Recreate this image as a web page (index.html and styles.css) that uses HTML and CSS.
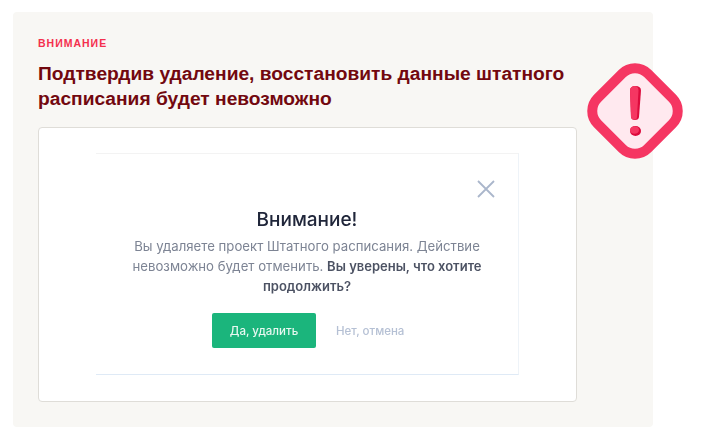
FILE: index.html
```html
<!DOCTYPE html>
<html lang="en">
  <head>
    <title>Внимание</title>
    <link rel="stylesheet" href="styles.css">
  </head>

  <body>
    <div class="panel">
      <p class="label">ВНИМАНИЕ</p>
      <h2 class="title">Подтвердив удаление, восстановить данные штатного расписания будет невозможно</h2>
      <div class="card">
        <div class="shot">
          <svg class="close" width="18" height="18" viewBox="0 0 18 18">
            <path d="M1 1L17 17M17 1L1 17" stroke="#aab6cb" stroke-width="1.8" fill="none"/>
          </svg>
          <h3 class="shot-title">Внимание!</h3>
          <p class="shot-text">Вы удаляете проект Штатного расписания. Действие невозможно будет отменить. <b>Вы уверены, что хотите продолжить?</b></p>
          <div class="actions">
            <span class="btn-yes">Да, удалить</span>
            <span class="btn-no">Нет, отмена</span>
          </div>
        </div>
      </div>
      <svg class="warn" width="96" height="96" viewBox="0 0 96 96">
        <rect x="12.5" y="12.5" width="71" height="71" rx="18" transform="rotate(45 48 48)" fill="#ffe9ef" stroke="#f53662" stroke-width="10"/>
        <path d="M43 27.5C43 24.5 45 23 48.5 23C52 23 54 24.500 54 27.500L52 54C51.800 56 50.500 57 48 57C45.500 57 44.200 56 44 54Z" fill="#dc0a3c"/>
        <path d="M43 27.500C43 24.500 45 23 47.500 23C50 23 51.500 24.500 51.500 27.500L50 54C49.800 56 49 56.500 47.500 56.500C45.500 56.500 44.200 56 44 54Z" fill="#f53662"/>
        <ellipse cx="48.500" cy="68" rx="5.500" ry="5" fill="#dc0a3c"/>
        <ellipse cx="47.500" cy="67" rx="4.500" ry="3.800" fill="#f53662"/>
      </svg>
    </div>
  </body>
</html>
```

FILE: styles.css
```css
body {
  margin: 0;
  padding: 12px 13px;
  background-color: #fff;
  font-family: "Liberation Sans", Arial, sans-serif;
}

.panel {
  position: relative;
  box-sizing: border-box;
  width: 640px;
  height: 415px;
  padding: 25px;
  background-color: #f8f7f4;
  border-radius: 4px;
}

.label {
  margin: 0;
  font-size: 10.5px;
  line-height: 13px;
  font-weight: 700;
  letter-spacing: 1px;
  color: #f4304e;
}

.title {
  margin: 11px 0 0;
  font-size: 19.2px;
  line-height: 25px;
  font-weight: 700;
  color: #72080f;
}

.card {
  box-sizing: border-box;
  width: 539px;
  height: 275px;
  margin-top: 16px;
  padding: 25px 57px 26px;
  background-color: #fff;
  border: 1px solid #dfddd8;
  border-radius: 4px;
}

/* the dialog is a photo in the original, so it stays a bit soft */
.shot {
  position: relative;
  box-sizing: border-box;
  height: 222px;
  padding-top: 54px;
  border-top: 1px solid #f3f3f3;
  border-right: 1px solid #eef3f8;
  border-bottom: 1px solid #dfeaf6;
  font-family: Inter, "Noto Sans", sans-serif;
  text-align: center;
  filter: blur(0.35px);
}

.close {
  position: absolute;
  top: 26px;
  right: 23px;
}

.shot-title {
  margin: 0;
  font-size: 19px;
  line-height: 24px;
  font-weight: 500;
  color: #20263a;
}

.shot-text {
  width: 370px;
  margin: 4px auto 0;
  font-size: 13.2px;
  line-height: 20px;
  color: #7d8494;
}

.shot-text b {
  font-size: 13px;
  font-weight: 600;
  color: #4c5263;
}

.actions {
  display: flex;
  align-items: center;
  gap: 20px;
  margin: 17px 0 0 116px;
}

.btn-yes {
  width: 104px;
  height: 35px;
  line-height: 36px;
  font-size: 11.5px;
  font-weight: 500;
  color: #e8f8f1;
  background-color: #1bb57c;
  border-radius: 2px;
}

.btn-no {
  font-size: 11.5px;
  font-weight: 500;
  color: #b5c0d4;
}

.warn {
  position: absolute;
  top: 51px;
  left: 574px;
}
```
